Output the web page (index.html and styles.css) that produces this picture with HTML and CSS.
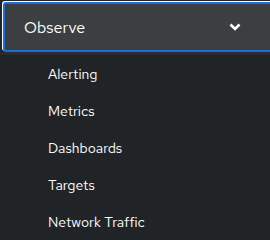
FILE: index.html
```html
<!doctype html>
<html lang="en">
<head>
<meta charset="utf-8">
<title>Observe</title>
<link rel="stylesheet" href="styles.css">
</head>
<body>

<nav class="nav">

	<button class="navToggle" type="button">
		<span class="navTitle">Observe</span>
		<svg class="navChevron" width="12" height="9" viewBox="0 0 12 9">
			<path d="M1.5 1.5 L6 6 L10.5 1.5" fill="none" stroke="#fff" stroke-width="2.6" />
		</svg>
	</button>

	<ul class="navList">
		<li><a href="#">Alerting</a></li>
		<li><a href="#">Metrics</a></li>
		<li><a href="#">Dashboards</a></li>
		<li><a href="#">Targets</a></li>
		<li><a href="#">Network Traffic</a></li>
	</ul>

</nav>

</body>
</html>
```

FILE: styles.css
```css
* { box-sizing: border-box; }

html, body { height: 100%; }

body { background-color: #212427; color: #fff; font-family: "Red Hat Text", Lato, "Noto Sans", sans-serif; margin: 0; }

.nav { padding-top: 2px; }

.navToggle { align-items: center; background-color: #3c3f42; border: 2px solid #1c6ed4; border-radius: 3px;
	box-shadow: -1px -1px 0 #fff; color: #fff; display: flex; font: inherit; height: 50px;
	margin-left: 3px; padding: 0 32px 0 19px; width: 272px; }

.navTitle { flex: 1; font-size: 16px; text-align: left; }

.navChevron { display: block; }

.navList { border-top: 3px solid #2a2d30; list-style: none; margin: 0; padding: 0; }

.navList li { height: 37px; }

.navList a { color: #fff; display: block; font-size: 14px; line-height: 37px; padding-left: 48px; padding-top: 1px; text-decoration: none; }
```
